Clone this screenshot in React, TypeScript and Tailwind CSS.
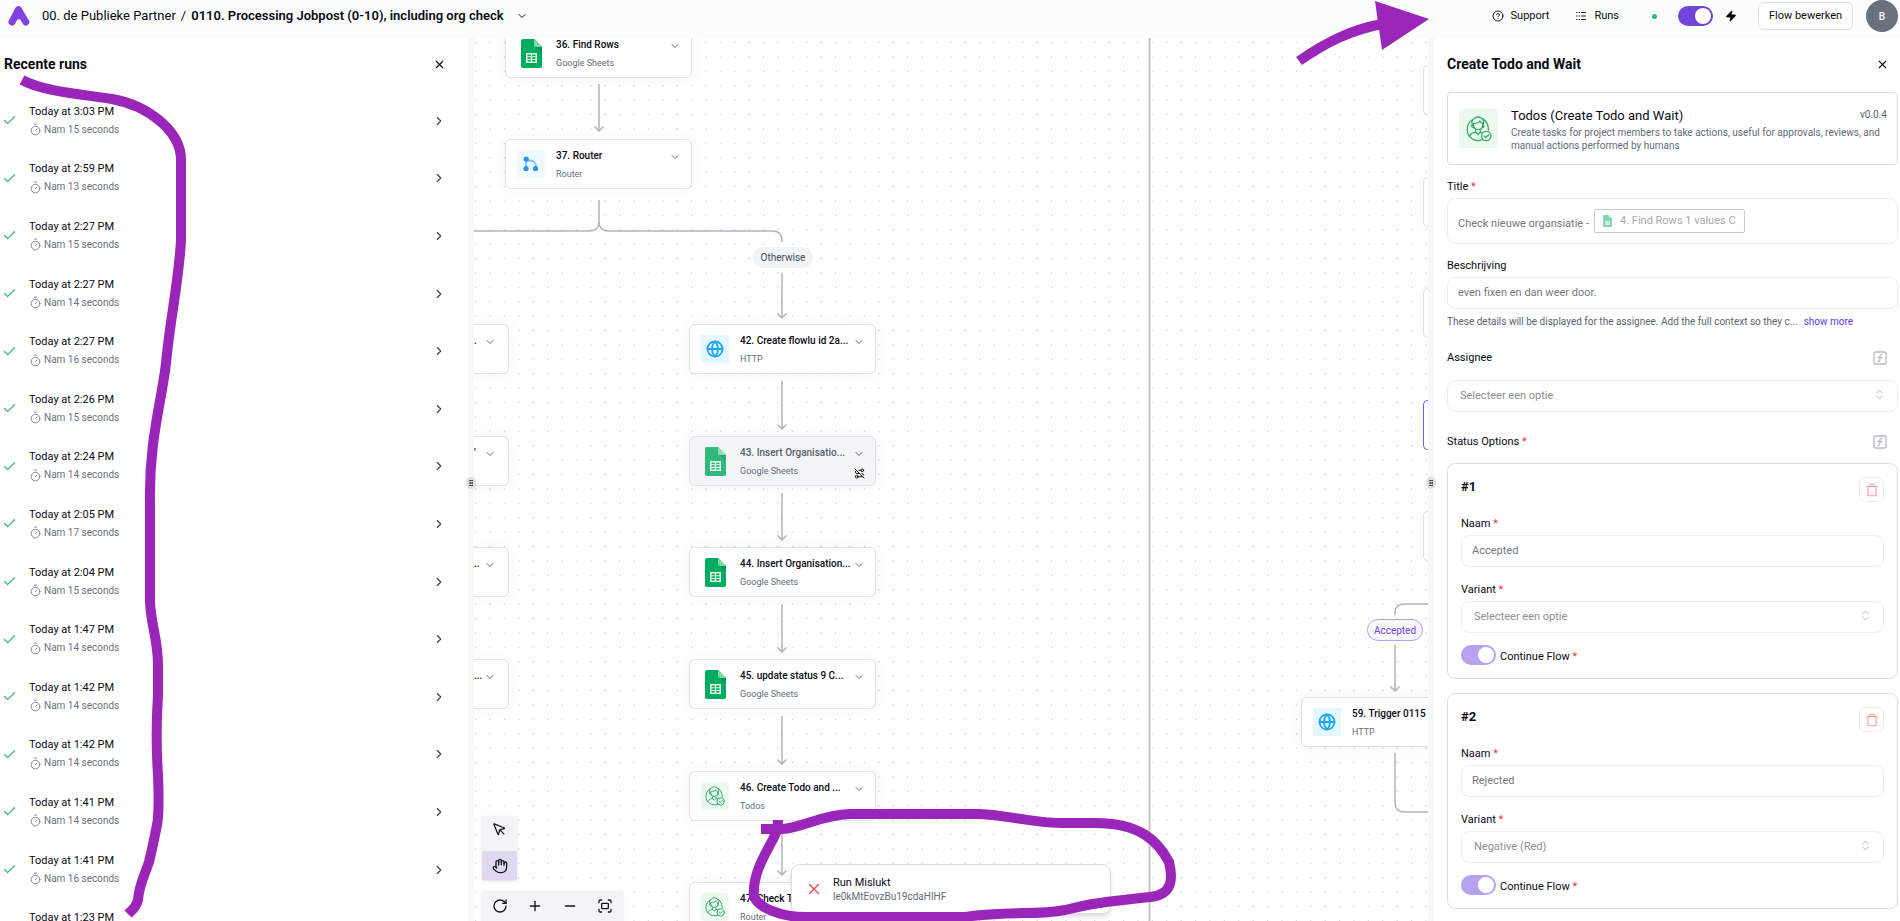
import {
  Check,
  ChevronDown,
  ChevronRight,
  ChevronsUpDown,
  CircleQuestionMark,
  Fullscreen,
  Globe,
  GripVertical,
  Hand,
  Logs,
  Minus,
  MousePointer,
  Plus,
  RotateCw,
  RouteOff,
  SquareFunction,
  Timer,
  Trash,
  X,
  Zap,
} from 'lucide-react';

const runs = [
  { time: '3:03 PM', seconds: 15 },
  { time: '2:59 PM', seconds: 13 },
  { time: '2:27 PM', seconds: 15 },
  { time: '2:27 PM', seconds: 14 },
  { time: '2:27 PM', seconds: 16 },
  { time: '2:26 PM', seconds: 15 },
  { time: '2:24 PM', seconds: 14 },
  { time: '2:05 PM', seconds: 17 },
  { time: '2:04 PM', seconds: 15 },
  { time: '1:47 PM', seconds: 14 },
  { time: '1:42 PM', seconds: 14 },
  { time: '1:42 PM', seconds: 14 },
  { time: '1:41 PM', seconds: 14 },
  { time: '1:41 PM', seconds: 16 },
  { time: '1:23 PM', seconds: 14 },
];

// Canvas coordinates, origin is the top left corner of the canvas
const steps = [
  { x: 31, y: -10, title: '36. Find Rows', piece: 'Google Sheets', icon: 'sheets' },
  { x: 31, y: 101, title: '37. Router', piece: 'Router', icon: 'router' },
  { x: 215, y: 286, title: '42. Create flowlu id 2a...', piece: 'HTTP', icon: 'http' },
  { x: 215, y: 398, title: '43. Insert Organisatio...', piece: 'Google Sheets', icon: 'sheets', skipped: true },
  { x: 215, y: 509, title: '44. Insert Organisation...', piece: 'Google Sheets', icon: 'sheets' },
  { x: 215, y: 621, title: '45. update status 9 C...', piece: 'Google Sheets', icon: 'sheets' },
  { x: 215, y: 733, title: '46. Create Todo and ...', piece: 'Todos', icon: 'todos' },
  { x: 215, y: 844, title: '47. Check Todo', piece: 'Router', icon: 'todos' },
  { x: 827, y: 659, title: '59. Trigger 0115 -', piece: 'HTTP', icon: 'http' },
];

const leftStubs = [
  { y: 286, tail: '.' },
  { y: 398, tail: "'" },
  { y: 509, tail: '..' },
  { y: 621, tail: '...' },
];

const rightStubs = [
  { y: 27 },
  { y: 139 },
  { y: 250 },
  { y: 362, selected: true },
  { y: 473 },
];

const arrows = [
  { x: 125, from: 46, to: 93 },
  { x: 308, from: 235, to: 280 },
  { x: 308, from: 343, to: 391 },
  { x: 308, from: 455, to: 502 },
  { x: 308, from: 566, to: 614 },
  { x: 308, from: 678, to: 726 },
  { x: 308, from: 790, to: 837 },
  { x: 921, from: 607, to: 653 },
];

function Logo() {
  return (
    <svg width="22" height="20" viewBox="0 0 22 20" fill="none" stroke="#8142e3" strokeWidth="7" strokeLinecap="round" strokeLinejoin="round">
      <path d="M10.500 3.700 17.800 16M10.500 3.700 4 16" />
      <path d="M10.500 5v5" />
    </svg>
  );
}

function SheetsIcon({ width, height }: any) {
  return (
    <svg width={width} height={height} viewBox="0 0 21 29">
      <path d="M2 0h11l8 8v19a2 2 0 0 1-2 2H2a2 2 0 0 1-2-2V2a2 2 0 0 1 2-2Z" fill="#00ac5f" />
      <path d="M13 0l8 8h-6a2 2 0 0 1-2-2Z" fill="#7fd6ab" />
      <path d="M15 8h6v6Z" fill="#00934f" />
      <path d="M5 14h11v10H5Z M6.500 15.500v1.700h3.300v-1.700Z M11.200 15.500v1.700h3.300v-1.700Z M6.500 18.300v1.600h3.300v-1.600Z M11.200 18.300v1.600h3.300v-1.600Z M6.500 21v1.600h3.300v-1.600Z M11.200 21v1.600h3.300v-1.600Z" fill="#e2f7ec" fillRule="evenodd" />
    </svg>
  );
}

function RouterIcon() {
  return (
    <svg width="16" height="16" viewBox="0 0 16 16" fill="none">
      <path d="M3 3v10M3 4.500h4.500A6 6 0 0 1 13 10.500V13" stroke="#7cc0f8" strokeWidth="1.800" />
      <circle cx="3.200" cy="3" r="2.600" fill="#2795f3" />
      <circle cx="3" cy="12.500" r="2.600" fill="#2795f3" />
      <circle cx="12.500" cy="12.500" r="2.600" fill="#2795f3" />
    </svg>
  );
}

function TodosIcon({ size }: any) {
  return (
    <svg width={size} height={size} viewBox="0 0 26 26" fill="none" stroke="#34ab63" strokeWidth="1.300" strokeLinecap="round" strokeLinejoin="round">
      <path d="M16.500 23.700A11 11 0 0 1 1.200 13.500C1.200 9 3.600 5.500 6.800 3.500" />
      <path d="M17 2.800c3.600 2.600 5.500 7 5.500 11.200" />
      <path d="M6.500 9c-1.500-2.500-.5-5.500 2-6.500C10 .6 14 .4 15.800 2.400c2 1.600 2.300 4.300 1 6.600" />
      <path d="M7.500 7.500c3 0 5.500-1 6.500-2.500.5 1.500 1.500 2.300 2.700 2.500v2.300a4.700 4.700 0 0 1-9.200 0Z" />
      <path d="M6.500 9c-1.300 0-1.300 2.600 1.200 2.600M17 9c1.300 0 1.300 2.600-.8 2.600" />
      <path d="M9.700 14v2.200c-3 .4-5.300 1.600-6.200 4M14.300 14v2.200l2 .6M9.700 16.200l2.300 2.400 2.300-2.400" />
      <circle cx="20.300" cy="20" r="4.700" />
      <path d="m18.300 20 1.500 1.600 2.700-2.800" />
    </svg>
  );
}

function StepIcon({ icon }: any) {
  if (icon === 'sheets') return <SheetsIcon width={21} height={29} />;
  if (icon === 'router') {
    return (
      <span className="flex size-7 items-center justify-center rounded-sm bg-[#eefaff]">
        <RouterIcon />
      </span>
    );
  }
  if (icon === 'http') {
    return (
      <span className="flex size-7 items-center justify-center bg-[#e6f6ff]">
        <Globe size={18} strokeWidth={2.4} className="text-[#1ea7fd]" />
      </span>
    );
  }
  return (
    <span className="flex size-7 items-center justify-center rounded-sm bg-[#ebf9f1]">
      <TodosIcon size={20} />
    </span>
  );
}

function StepCard({ x, y, title, piece, icon, skipped }: any) {
  return (
    <div
      className={`absolute flex h-[50px] w-[187px] rounded-md border border-[#dfe2e7] shadow-[0_0_14px_rgba(0,0,0,0.05)] ${skipped ? 'bg-[#f4f5f7]' : 'bg-white'}`}
      style={{ left: x, top: y }}
    >
      <div className={`flex w-[50px] items-center justify-center ${skipped ? 'opacity-80' : ''}`}>
        <StepIcon icon={icon} />
      </div>
      <div className="flex min-w-0 flex-1 flex-col gap-1 pt-2">
        <div className={`text-[10px] leading-4 font-medium whitespace-nowrap ${skipped ? 'text-[#565d6b]' : 'text-[#0a0a14]'}`}>{title}</div>
        <div className="text-[9px] leading-3 text-[#646c7a]">{piece}</div>
      </div>
      <div className="flex w-8 flex-col items-center gap-2 pt-[11px] text-[#5b6270]">
        <button aria-label={`Open menu ${title}`}>
          <ChevronDown size={12} />
        </button>
        {skipped && <RouteOff size={11} className="text-black" />}
      </div>
    </div>
  );
}

function Canvas() {
  return (
    <main className="relative min-w-0 flex-1 overflow-hidden bg-white">
      <svg className="absolute inset-0 size-full" fill="none">
        <defs>
          <pattern id="dots" x="1" y="4" width="14.4" height="14.4" patternUnits="userSpaceOnUse">
            <rect width="1.100" height="1.100" fill="#bfbfc4" />
          </pattern>
        </defs>
        <rect width="100%" height="100%" fill="url(#dots)" />
        <g stroke="#b3b3ba" strokeWidth="1.500">
          <path d="M675.500 0V883" stroke="#c4c4c8" strokeWidth="2" />
          <path d="M125 162V184Q125 193 115 193H0M125 184Q125 193 135 193H299Q308 193 308 204" />
          <path d="M921 577V574Q921 566 931 566H955M921 715V765Q921 774 931 774H955" />
          {arrows.map((a) => (
            <path key={`${a.x}-${a.from}`} d={`M${a.x} ${a.from}V${a.to}m-4.500 -4.500l4.500 4.500l4.500 -4.500`} />
          ))}
        </g>
      </svg>

      {leftStubs.map((s) => (
        <div
          key={s.y}
          className="absolute left-0 flex h-[50px] w-[35px] justify-between rounded-r-md border border-l-0 border-[#dfe2e7] bg-white pt-2 pr-3 text-[10px] leading-4 font-medium shadow-[0_0_14px_rgba(0,0,0,0.05)]"
          style={{ top: s.y }}
        >
          <span>{s.tail}</span>
          <ChevronDown size={12} className="mt-[3px] text-[#5b6270]" />
        </div>
      ))}
      {rightStubs.map((s) => (
        <div
          key={s.y}
          className={`absolute right-0 h-[50px] w-[5px] rounded-l-md border border-r-0 bg-white shadow-[0_0_14px_rgba(0,0,0,0.05)] ${s.selected ? 'border-[#8257e6]' : 'border-[#dfe2e7]'}`}
          style={{ top: s.y }}
        />
      ))}
      {steps.map((s) => (
        <StepCard key={s.title} {...s} />
      ))}

      <span className="absolute top-[209px] left-[279px] flex h-[21px] w-[60px] items-center justify-center rounded-full bg-[#f2f3f5] text-[10px] text-[#444a57]">
        Otherwise
      </span>
      <span className="absolute top-[581px] left-[893px] flex h-[22px] w-14 items-center justify-center rounded-full border border-[#b9a3f0] bg-[#f8f6fe] text-[10px] text-[#7544dc]">
        Accepted
      </span>

      <div className="absolute bottom-0 left-2 flex flex-col items-start gap-[11px] text-[#16161d]">
        <div className="flex w-[35px] flex-col shadow-sm">
          <button aria-label="Select" className="flex h-[35px] items-center justify-center bg-[#f3f4f6] pb-2">
            <MousePointer size={15} />
          </button>
          <button aria-label="Pan" className="flex h-[29px] items-center justify-center bg-[#ded8f1]">
            <Hand size={16} />
          </button>
        </div>
        <div className="flex h-[30px] bg-[#f3f4f6] shadow-sm">
          <button aria-label="Reset" className="flex w-[35px] items-center justify-center">
            <RotateCw size={16} />
          </button>
          <button aria-label="Zoom in" className="flex w-[35px] items-center justify-center">
            <Plus size={16} />
          </button>
          <button aria-label="Zoom out" className="flex w-[35px] items-center justify-center">
            <Minus size={16} />
          </button>
          <button aria-label="Fit view" className="flex w-9 items-center justify-center">
            <Fullscreen size={16} />
          </button>
        </div>
      </div>
    </main>
  );
}

function Handle() {
  return (
    <div className="relative w-1.5 shrink-0 bg-[#f8f8fa]">
      <span className="absolute top-[439px] -left-0.5 z-10 flex h-3 w-2.5 items-center justify-center rounded-full bg-[#dbdee3]">
        <GripVertical size={8} strokeWidth={3} className="shrink-0 text-[#333]" />
      </span>
    </div>
  );
}

function RunsPanel() {
  return (
    <aside className="flex w-[468px] shrink-0 flex-col overflow-hidden bg-white">
      <div className="flex h-[54px] shrink-0 items-center justify-between pr-[22px] pb-px pl-1">
        <h2 className="text-[14px] font-bold">Recente runs</h2>
        <button aria-label="Close runs">
          <X size={13} />
        </button>
      </div>
      <ul className="grid min-h-[864px] auto-rows-fr">
        {runs.map((r, i) => (
          <li key={i} className="flex items-center pr-[22px] pl-0.5">
            <Check size={15} strokeWidth={2} className="mr-3 text-[#3cb67a]" />
            <div className="flex-1">
              <div className="text-[11px] leading-[18px]">Today at {r.time}</div>
              <div className="flex items-center gap-0.5 text-[10px] leading-[18px] text-[#6b7280]">
                <Timer size={13} strokeWidth={1.5} />
                Nam {r.seconds} seconds
              </div>
            </div>
            <button aria-label={`Open run ${i + 1}`}>
              <ChevronRight size={14} className="text-[#444]" />
            </button>
          </li>
        ))}
      </ul>
    </aside>
  );
}

function Required() {
  return <span className="text-[#ef3340]"> *</span>;
}

function Switch({ id, disabled }: any) {
  return (
    <input
      id={id}
      type="checkbox"
      role="switch"
      aria-label={id}
      defaultChecked
      disabled={disabled}
      className="flex h-5 w-[35px] shrink-0 appearance-none items-center justify-end rounded-full bg-[#6e45dd] px-0.5 before:size-4 before:rounded-full before:bg-white disabled:bg-[#b6a2ee]"
    />
  );
}

function SelectBox({ id, value }: any) {
  return (
    <div className="relative">
      <select id={id} disabled className="block h-8 w-full appearance-none rounded-lg border border-[#ebecef] bg-white px-3 text-[11px] text-[#8e8e94] opacity-100">
        <option>{value}</option>
      </select>
      <ChevronsUpDown size={13} strokeWidth={1.5} className="absolute top-2 right-3 text-[#a3a3a8]" />
    </div>
  );
}

function StatusOption({ index, name, variant }: any) {
  return (
    <section className="rounded-lg border border-[#dadde3] p-[13px]">
      <div className="flex items-start justify-between">
        <h3 className="text-[13px] leading-5 font-bold">#{index}</h3>
        <button aria-label={`Remove option ${index}`} className="flex size-[25px] items-center justify-center rounded-md border border-[#ececef] text-[#f59a9e]">
          <Trash size={14} strokeWidth={1.8} />
        </button>
      </div>
      <label htmlFor={`name-${index}`} className="mt-3.5 block text-[11px] leading-4">
        Naam<Required />
      </label>
      <input
        id={`name-${index}`}
        defaultValue={name}
        className="mt-[3px] block h-8 w-full rounded-lg border border-[#ebecef] px-[10px] pb-0.5 text-[11px] text-[#76777d]"
      />
      <label htmlFor={`variant-${index}`} className="mt-[15px] mb-[3px] block text-[11px] leading-4">
        Variant<Required />
      </label>
      <SelectBox id={`variant-${index}`} value={variant} />
      <div className="mt-3 flex items-center gap-1">
        <Switch id={`continue-${index}`} disabled />
        <label htmlFor={`continue-${index}`} className="pt-1 text-[11px] leading-4">
          Continue Flow<Required />
        </label>
      </div>
    </section>
  );
}

function FieldHeader({ id, label, required }: any) {
  return (
    <div className="flex items-center justify-between pr-[10px]">
      <label htmlFor={id} className="text-[11px] leading-4">
        {label}
        {required && <Required />}
      </label>
      <button aria-label={`Dynamic value ${label}`}>
        <SquareFunction size={16} strokeWidth={2} className="text-[#b9bbc1]" />
      </button>
    </div>
  );
}

function SettingsPanel() {
  return (
    <aside className="flex w-[466px] shrink-0 flex-col overflow-hidden bg-white pr-0.5 pl-[13px]">
      <div className="flex h-[54px] shrink-0 items-center justify-between pr-[9px] pb-px">
        <h2 className="text-[14px] font-bold">Create Todo and Wait</h2>
        <button aria-label="Close settings">
          <X size={13} />
        </button>
      </div>

      <div className="flex h-[73px] shrink-0 items-center gap-[13px] rounded-sm border border-[#d9dce3] pr-[10px] pl-[11px]">
        <span className="flex size-[39px] shrink-0 items-center justify-center rounded-sm bg-[#ebf9f1]">
          <TodosIcon size={26} />
        </span>
        <div className="flex-1">
          <div className="flex justify-between">
            <span className="text-[13px] leading-5">Todos (Create Todo and Wait)</span>
            <span className="text-[10px] leading-[18px] text-[#5c6370]">v0.0.4</span>
          </div>
          <p className="text-[10px] leading-[13px] text-[#646c7a]">
            Create tasks for project members to take actions, useful for approvals, reviews, and
            <br />
            manual actions performed by humans
          </p>
        </div>
      </div>

      <label htmlFor="title" className="mt-3.5 text-[11px] leading-4">
        Title<Required />
      </label>
      <div className="mt-[3px] flex h-[46px] items-center rounded-lg border border-[#ebecef] px-[10px]">
        <input id="title" defaultValue="Check nieuwe organsiatie -" className="w-[136px] pt-1.5 text-[11px] text-[#76777d]" />
        <span className="flex h-6 items-center gap-2 rounded-xs border border-[#c9cacd] px-2 text-[11px] text-[#a6a8ad]">
          <span className="opacity-50">
            <SheetsIcon width={9} height={12} />
          </span>
          4. Find Rows 1 values C
        </span>
      </div>

      <label htmlFor="description" className="mt-3.5 text-[11px] leading-4">
        Beschrijving
      </label>
      <input
        id="description"
        defaultValue="even fixen en dan weer door."
        className="mt-[3px] block h-8 w-full rounded-lg border border-[#ebecef] px-[10px] pb-0.5 text-[11px] text-[#76777d]"
      />
      <p className="mt-[5px] text-[10px] leading-4 text-[#5c6370]">
        These details will be displayed for the assignee. Add the full context so they c...
        <a href="#more" className="ml-1.5 text-[#6138dd]">show more</a>
      </p>

      <div className="mt-5">
        <FieldHeader id="assignee" label="Assignee" />
      </div>
      <div className="mt-3.5">
        <SelectBox id="assignee" value="Selecteer een optie" />
      </div>

      <div className="mt-[22px] mb-[13px]">
        <FieldHeader id="name-1" label="Status Options" required />
      </div>
      <div className="flex flex-col gap-3.5">
        <StatusOption index={1} name="Accepted" variant="Selecteer een optie" />
        <StatusOption index={2} name="Rejected" variant="Negative (Red)" />
      </div>
    </aside>
  );
}

function Header() {
  return (
    <header className="flex h-[38px] shrink-0 items-start bg-[#fbfcfc] pr-0.5 pl-2">
      <div className="flex h-8 items-center text-[13px]">
        <Logo />
        <a href="#project" className="ml-3">00. de Publieke Partner</a>
        <span className="mx-[5px]">/</span>
        <h1 className="font-semibold">0110. Processing Jobpost (0-10), including org check</h1>
        <button aria-label="Flow menu" className="ml-3">
          <ChevronDown size={12} />
        </button>
      </div>
      <div className="ml-auto flex h-8 items-center text-[11px]">
        <a href="#support" className="flex items-center gap-[7px]">
          <CircleQuestionMark size={12} strokeWidth={1.8} />
          Support
        </a>
        <a href="#runs" className="ml-[26px] flex items-center gap-[7px]">
          <Logs size={12} strokeWidth={1.8} />
          Runs
        </a>
        <span className="mr-[21px] ml-[33px] size-[5px] rounded-full bg-[#35b87a]" />
        <Switch id="flow-enabled" />
        <Zap size={12} className="mx-3 fill-current" />
        <button className="ml-[9px] h-7 w-[95px] rounded-md border border-[#dcdfe4] bg-white">Flow bewerken</button>
        <span className="ml-[13px] flex size-8 items-center justify-center rounded-full bg-[#6b727f] text-[10px] font-medium text-white">B</span>
      </div>
    </header>
  );
}

function RunToast() {
  return (
    <div role="status" className="absolute top-[864px] left-[791px] flex h-[50px] w-80 items-center gap-[10px] rounded-lg border border-[#d9dce3] bg-white pl-[13px] shadow-md">
      <X size={18} strokeWidth={1.8} className="text-[#ef4453]" />
      <div>
        <div className="text-[11px] leading-[15px]">Run Mislukt</div>
        <div className="text-[10px] leading-[14px] text-[#646c7a]">le0kMtEovzBu19cdaHIHF</div>
      </div>
    </div>
  );
}

// Hand drawn marker strokes on top of everything
function MarkerStrokes() {
  return (
    <svg className="pointer-events-none absolute inset-0" width="1900" height="921" viewBox="0 0 1900 921" fill="none" stroke="#9926b8" strokeWidth="10">
      <path d="M22 80C45 92 80 94 112 99C150 106 181 132 181 160V240C179 280 170 320 166 363C162 400 149 440 150 500V602C151 625 158 640 158 665V695C156 725 156 745 158 775C159 800 159 815 157 825C153 845 152 850 149 862C144 877 139 885 138 900C136 908 131 911 128 914" />
      <path d="M1299 61C1325 43 1350 30 1382 24" />
      <path d="M1375 1 1429 19 1382 50Z" fill="#9926b8" stroke="none" />
      <path d="M761 829H782C802 828 820 815 850 814H980C1005 815 1035 823 1060 823H1095C1140 823 1158 841 1169 862C1173 878 1173 895 1150 897C1095 903 1090 904 1065 910C1035 916 1010 910 965 917H806C780 917 760 908 754 897C752 876 764 856 771 843C776 834 778 829 778 820" />
    </svg>
  );
}

export default function App() {
  return (
    <div className="relative flex h-screen flex-col overflow-hidden bg-white font-['Roboto',sans-serif] text-[#0a0a14]">
      <Header />
      <div className="flex min-h-0 flex-1">
        <RunsPanel />
        <Handle />
        <Canvas />
        <Handle />
        <SettingsPanel />
      </div>
      <RunToast />
      <MarkerStrokes />
    </div>
  );
}
